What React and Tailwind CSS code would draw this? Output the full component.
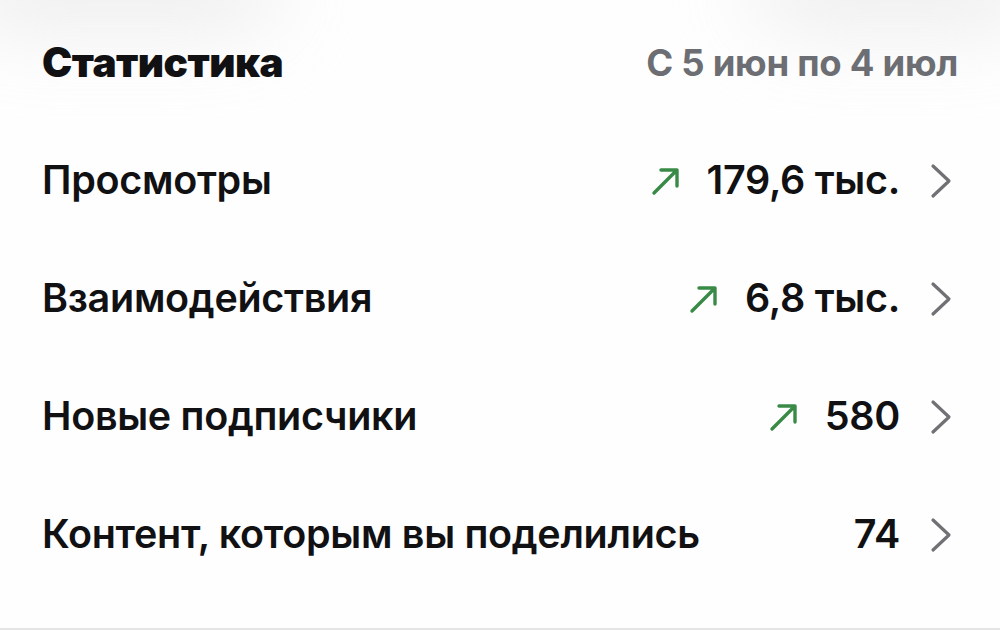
const ROWS = [
  { label: 'Просмотры', value: '179,6 тыс.', up: true },
  { label: 'Взаимодействия', value: '6,8 тыс.', up: true },
  { label: 'Новые подписчики', value: '580', up: true },
  { label: 'Контент, которым вы поделились', value: '74', up: false },
]

function ArrowUp() {
  return (
    <svg width="30" height="30" viewBox="0 0 30 30" className="text-[#388a46]">
      <path d="M3 27L26 4M10 4h16v16" stroke="currentColor" strokeWidth="3.4" fill="none" strokeLinecap="round" strokeLinejoin="round" />
    </svg>
  )
}

function Chevron() {
  return (
    <svg width="22" height="36" viewBox="0 0 22 36" className="text-[#707075]">
      <path d="M3 3l16 15L3 33" stroke="currentColor" strokeWidth="3.2" fill="none" strokeLinecap="round" strokeLinejoin="round" />
    </svg>
  )
}

export default function App() {
  return (
    <div className="relative w-[1000px] h-[630px] bg-[#fefefe] overflow-hidden font-['Inter',sans-serif] text-[#111113]">
      {/* faint shadows at top corners */}
      <div className="absolute -top-16 -left-10 w-80 h-24 rounded-full bg-[#e8e8e8] blur-2xl opacity-70" />
      <div className="absolute -top-16 -right-10 w-72 h-24 rounded-full bg-[#e8e8e8] blur-2xl opacity-70" />

      <div className="relative flex flex-col pl-[42px] pr-[42px] pt-[39px]">
        <div className="flex items-center justify-between h-[48px]">
          <h2 className="text-[40.5px] font-black tracking-[-0.5px]">Статистика</h2>
          <span className="text-[36.5px] font-bold text-[#6c6e73] tracking-[-0.3px]">С 5 июн по 4 июл</span>
        </div>

        <div className="flex flex-col mt-[35px]">
          {ROWS.map((r) => (
            <div key={r.label} className="flex items-center h-[118px]">
              <span className="flex-1 text-[39.5px] font-semibold tracking-[-0.3px]">{r.label}</span>
              {r.up && <span className="mr-[26px] flex items-center"><ArrowUp /></span>}
              <span className="text-[39.5px] font-semibold tracking-[-0.3px]">{r.value}</span>
              <span className="ml-[30px] mr-[6px] flex items-center"><Chevron /></span>
            </div>
          ))}
        </div>
      </div>

      <div className="absolute bottom-0 left-0 right-0 h-[2px] bg-[#e4e4e4]" />
    </div>
  )
}
